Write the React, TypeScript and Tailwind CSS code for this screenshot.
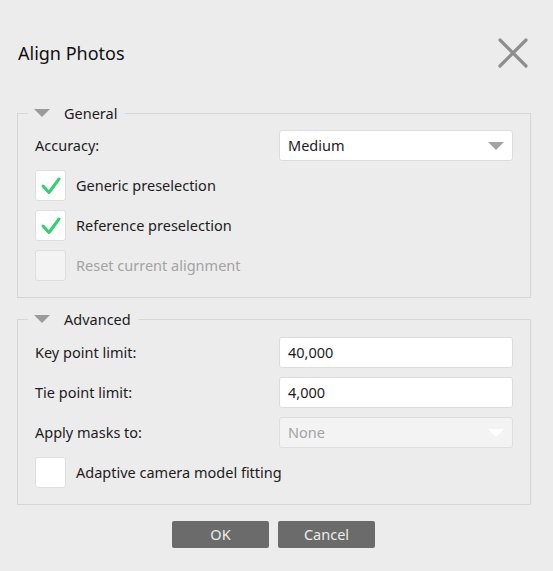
import React from "react";

const font = { fontFamily: '"Noto Sans", "DejaVu Sans", sans-serif' };

function Tri({ color = "#9b9b9b" }: { color?: string }) {
  return (
    <svg width="16" height="8" viewBox="0 0 16 8">
      <polygon points="0,0 16,0 8,8" fill={color} />
    </svg>
  );
}

function Check({ checked, disabled }: { checked?: boolean; disabled?: boolean }) {
  return (
    <div
      className={`w-[31px] h-[31px] rounded-[3px] border border-[#dedede] flex items-center justify-center ${
        disabled ? "bg-[#f3f3f3]" : "bg-white"
      }`}
    >
      {checked && (
        <svg width="22" height="20" viewBox="0 0 22 20">
          <polyline
            points="3,10 9,16.5 19,3"
            fill="none"
            stroke="#2ed36b"
            strokeWidth="3"
            strokeLinecap="round"
            strokeLinejoin="round"
          />
        </svg>
      )}
    </div>
  );
}

function CheckRow({ label, checked, disabled }: { label: string; checked?: boolean; disabled?: boolean }) {
  return (
    <div className="flex items-center gap-[10px] h-[31px]">
      <Check checked={checked} disabled={disabled} />
      <span className={`text-[14.5px] ${disabled ? "text-[#a3a3a3]" : "text-[#1c1c1c]"}`}>{label}</span>
    </div>
  );
}

function Legend({ label }: { label: string }) {
  return (
    <legend className="ml-[-7px] pl-[6px] pr-[8px] h-[14px] flex items-center">
      <span className="mr-[14px] flex items-center">
        <Tri />
      </span>
      <span className="text-[14.5px] text-[#1c1c1c] leading-[14px]">{label}</span>
    </legend>
  );
}

function Field({ label, children }: { label: string; children: React.ReactNode }) {
  return (
    <div className="flex items-center justify-between h-[31px]">
      <span className="text-[14.5px] text-[#1c1c1c]">{label}</span>
      {children}
    </div>
  );
}

export default function App() {
  return (
    <div className="w-[553px] h-[571px] bg-[#ececec] overflow-hidden" style={font}>
      <div className="h-[106px] flex items-center justify-between pl-[18px] pr-[24px]">
        <span className="text-[18px] text-[#111]">Align Photos</span>
        <svg width="32" height="32" viewBox="0 0 32 32">
          <path d="M3 3 L29 29 M29 3 L3 29" stroke="#8e8e8e" strokeWidth="3.2" strokeLinecap="round" />
        </svg>
      </div>

      <fieldset className="ml-[17px] w-[514px] border border-[#d6d6d6] pl-[17px] pr-[17px] pt-[10px] pb-[16px]">
        <Legend label="General" />
        <div className="flex flex-col gap-[9px]">
          <Field label="Accuracy:">
            <div className="w-[234px] h-[31px] bg-white border border-[#dcdcdc] rounded-[3px] flex items-center justify-between pl-[8px] pr-[8px]">
              <span className="text-[14.5px] text-[#1c1c1c]">Medium</span>
              <Tri color="#a3a3a3" />
            </div>
          </Field>
          <CheckRow label="Generic preselection" checked />
          <CheckRow label="Reference preselection" checked />
          <CheckRow label="Reset current alignment" disabled />
        </div>
      </fieldset>

      <fieldset className="mt-[14px] ml-[17px] w-[514px] border border-[#d6d6d6] pl-[17px] pr-[17px] pt-[11px] pb-[16px]">
        <Legend label="Advanced" />
        <div className="flex flex-col gap-[9px]">
          <Field label="Key point limit:">
            <div className="w-[234px] h-[31px] bg-white border border-[#dcdcdc] rounded-[3px] flex items-center pl-[8px]">
              <span className="text-[14.5px] text-[#1c1c1c]">40,000</span>
            </div>
          </Field>
          <Field label="Tie point limit:">
            <div className="w-[234px] h-[31px] bg-white border border-[#dcdcdc] rounded-[3px] flex items-center pl-[8px]">
              <span className="text-[14.5px] text-[#1c1c1c]">4,000</span>
            </div>
          </Field>
          <Field label="Apply masks to:">
            <div className="w-[234px] h-[31px] bg-[#f3f3f3] border border-[#dedede] rounded-[3px] flex items-center justify-between pl-[8px] pr-[8px]">
              <span className="text-[14.5px] text-[#a3a3a3]">None</span>
              <Tri color="#ffffff" />
            </div>
          </Field>
          <CheckRow label="Adaptive camera model fitting" />
        </div>
      </fieldset>

      <div className="mt-[16px] pl-[172px] flex gap-[9px]">
        <button className="w-[97px] h-[27px] bg-[#6b6b6b] rounded-[2px] text-[14.5px] text-[#ececec]">OK</button>
        <button className="w-[97px] h-[27px] bg-[#6b6b6b] rounded-[2px] text-[14.5px] text-[#ececec]">Cancel</button>
      </div>
    </div>
  );
}
